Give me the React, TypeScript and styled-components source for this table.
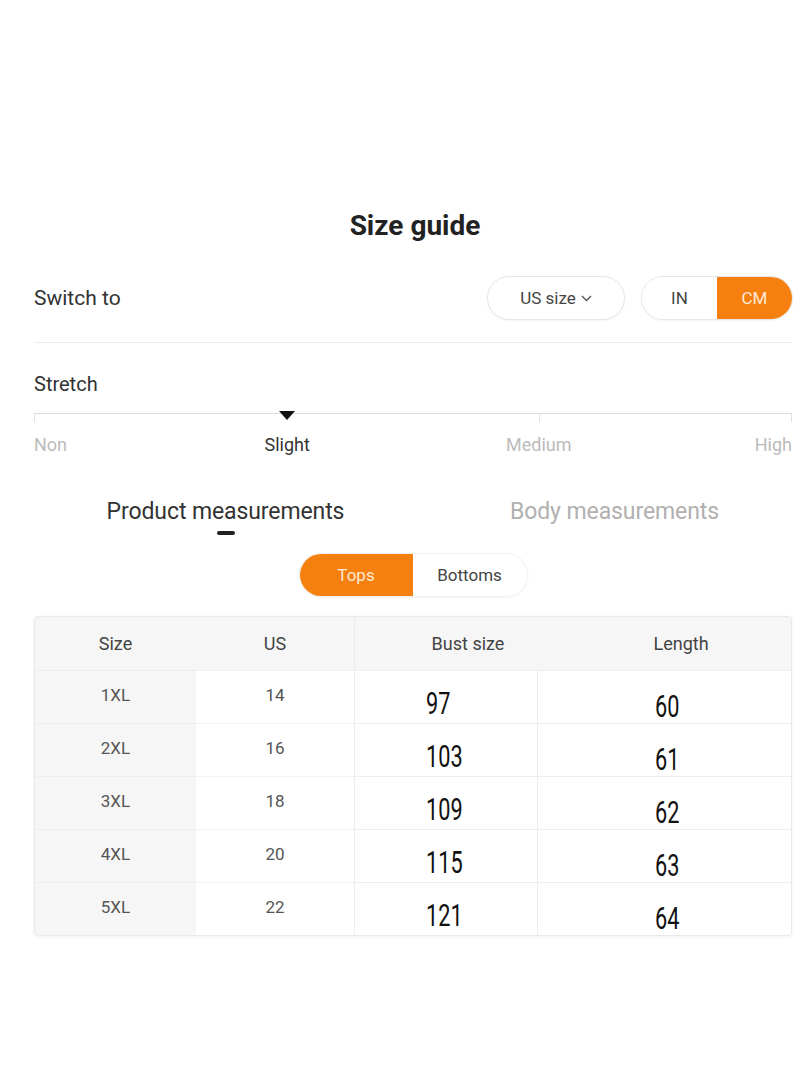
import React from "react";
import styled, { createGlobalStyle } from "styled-components";

const GlobalStyle = createGlobalStyle`
  body {
    margin: 0;
    background: #fff;
    font-family: Roboto, "Noto Sans", sans-serif;
    color: #333;
  }
`;

const ORANGE = "#f6800f";

const Page = styled.div`
  width: 800px;
  min-height: 1067px;
  box-sizing: border-box;
  padding: 208px 8px 0 34px;
`;

const Title = styled.h2`
  margin: 0;
  font-size: 28px;
  line-height: 36px;
  font-weight: 700;
  color: #222;
  text-align: center;
  padding-left: 4px;
`;

const SwitchRow = styled.div`
  display: flex;
  align-items: center;
  justify-content: space-between;
  margin-top: 32px;
  padding-bottom: 22px;
  border-bottom: 1px solid #ececec;
`;

const Label = styled.span`
  font-size: 21px;
  color: #333;
`;

const Controls = styled.div`
  display: flex;
  gap: 16px;
  margin-right: -1px;
`;

const Pill = styled.div`
  height: 44px;
  box-sizing: border-box;
  border: 1px solid #e6e6e6;
  border-radius: 22px;
  display: flex;
  align-items: center;
  overflow: hidden;
  box-shadow: 0 1px 3px rgba(0, 0, 0, 0.05);
`;

const Dropdown = styled(Pill)`
  width: 138px;
  justify-content: center;
  gap: 5px;
  font-size: 17px;
  color: #444;
`;

const Segment = styled.div<{ $active?: boolean; $w: number }>`
  width: ${(p) => p.$w}px;
  height: 100%;
  display: flex;
  align-items: center;
  justify-content: center;
  font-size: 17px;
  background: ${(p) => (p.$active ? ORANGE : "#fff")};
  color: ${(p) => (p.$active ? "#fde9d6" : "#444")};
`;

const StretchBlock = styled.div`
  margin-top: 28px;
`;

const StretchLabel = styled.div`
  font-size: 20px;
  line-height: 26px;
  color: #333;
`;

const Track = styled.div`
  position: relative;
  margin-top: 16px;
  height: 1px;
  background: #dcdcdc;
`;

const Tick = styled.span<{ $at: number }>`
  position: absolute;
  top: 0;
  left: ${(p) => p.$at}%;
  width: 1px;
  height: 9px;
  background: #e0e0e0;
  transform: translateX(${(p) => (p.$at === 100 ? "-1px" : "0")});
`;

const Marker = styled.span<{ $at: number }>`
  position: absolute;
  top: -2px;
  left: ${(p) => p.$at}%;
  width: 0;
  height: 0;
  border-left: 8px solid transparent;
  border-right: 8px solid transparent;
  border-top: 9px solid #111;
  transform: translateX(-8px);
`;

const LevelRow = styled.div`
  position: relative;
  height: 24px;
  margin-top: 19px;
`;

const LevelText = styled.span<{ $on?: boolean; $at: number }>`
  position: absolute;
  top: 0;
  left: ${(p) => p.$at}%;
  font-size: 18px;
  line-height: 24px;
  color: ${(p) => (p.$on ? "#333" : "#bbb")};
  transform: translateX(
    ${(p) => (p.$at === 0 ? "0" : p.$at === 100 ? "-100%" : "-50%")}
  );
  white-space: nowrap;
`;

const Tabs = styled.div`
  display: grid;
  grid-template-columns: 1fr 1fr;
  margin-top: 41px;
`;

const Tab = styled.div<{ $active?: boolean; $shift?: number }>`
  display: flex;
  flex-direction: column;
  align-items: center;
  font-size: 23px;
  line-height: 28px;
  letter-spacing: -0.1px;
  color: ${(p) => (p.$active ? "#333" : "#b0b0b0")};
  transform: translateX(${(p) => p.$shift || 0}px);
`;

const TabBar = styled.span`
  width: 18px;
  height: 4px;
  border-radius: 2px;
  background: #222;
  margin-top: 5px;
`;

const KindRow = styled.div`
  display: flex;
  justify-content: center;
  margin-top: 18px;
`;

const KindToggle = styled(Pill)`
  border-color: #f0f0f0;
`;

const Table = styled.div`
  margin-top: 19px;
  display: grid;
  grid-template-columns: 161px 158px 183px 256px;
  border: 1px solid #e9e9e9;
  border-radius: 4px;
  overflow: hidden;
  box-shadow: 0 1px 4px rgba(0, 0, 0, 0.06);
`;

const HeadCell = styled.div<{ $shift?: number; $line?: boolean }>`
  height: 53px;
  display: flex;
  align-items: center;
  justify-content: center;
  background: #f6f6f6;
  font-size: 18px;
  color: #444;
  border-left: ${(p) => (p.$line ? "1px solid #ebebeb" : "none")};
  padding-left: ${(p) => (p.$shift || 0) * 2}px;
`;

const SizeCell = styled.div`
  height: 53px;
  display: flex;
  align-items: center;
  justify-content: center;
  background: #f6f6f6;
  border-top: 1px solid #eeeeee;
  box-sizing: border-box;
  font-size: 17px;
  color: #555;
  padding-bottom: 4px;
`;

const UsCell = styled(SizeCell)`
  background: #fff;
  border-top: 1px solid #f3f3f3;
`;

const NumCell = styled.div<{ $indent: number; $drop: number }>`
  height: 53px;
  box-sizing: border-box;
  border-top: 1px solid #eeeeee;
  border-left: 1px solid #eeeeee;
  background: #fff;
  padding-left: ${(p) => p.$indent}px;
  padding-top: ${(p) => p.$drop}px;
`;

const BigNum = styled.span`
  display: inline-block;
  font-size: 31px;
  line-height: 26px;
  color: #111;
  transform: scaleX(0.7);
  transform-origin: left center;
`;

const Chevron = () => (
  <svg width="11" height="7" viewBox="0 0 11 7" fill="none">
    <path d="M1 1l4.5 4.5L10 1" stroke="#555" strokeWidth="1.4" />
  </svg>
);

const rows = [
  ["1XL", "14", "97", "60"],
  ["2XL", "16", "103", "61"],
  ["3XL", "18", "109", "62"],
  ["4XL", "20", "115", "63"],
  ["5XL", "22", "121", "64"],
];

export default function App() {
  return (
    <Page>
      <GlobalStyle />
      <Title>Size guide</Title>

      <SwitchRow>
        <Label>Switch to</Label>
        <Controls>
          <Dropdown>
            US size <Chevron />
          </Dropdown>
          <Pill>
            <Segment $w={75}>IN</Segment>
            <Segment $w={75} $active>
              CM
            </Segment>
          </Pill>
        </Controls>
      </SwitchRow>

      <StretchBlock>
        <StretchLabel>Stretch</StretchLabel>
        <Track>
          <Tick $at={0} />
          <Tick $at={66.6} />
          <Tick $at={100} />
          <Marker $at={33.4} />
        </Track>
        <LevelRow>
          <LevelText $at={0}>Non</LevelText>
          <LevelText $at={33.4} $on>
            Slight
          </LevelText>
          <LevelText $at={66.6}>Medium</LevelText>
          <LevelText $at={100}>High</LevelText>
        </LevelRow>
      </StretchBlock>

      <Tabs>
        <Tab $active $shift={2}>
          Product measurements
          <TabBar />
        </Tab>
        <Tab $shift={12}>Body measurements</Tab>
      </Tabs>

      <KindRow>
        <KindToggle>
          <Segment $w={113} $active>
            Tops
          </Segment>
          <Segment $w={114}>Bottoms</Segment>
        </KindToggle>
      </KindRow>

      <Table>
        <HeadCell>Size</HeadCell>
        <HeadCell>US</HeadCell>
        <HeadCell $line $shift={22}>
          Bust size
        </HeadCell>
        <HeadCell $shift={16}>Length</HeadCell>
        {rows.map(([size, us, bust, len]) => (
          <React.Fragment key={size}>
            <SizeCell>{size}</SizeCell>
            <UsCell>{us}</UsCell>
            <NumCell $indent={71} $drop={20}>
              <BigNum>{bust}</BigNum>
            </NumCell>
            <NumCell $indent={117} $drop={23}>
              <BigNum>{len}</BigNum>
            </NumCell>
          </React.Fragment>
        ))}
      </Table>
    </Page>
  );
}
